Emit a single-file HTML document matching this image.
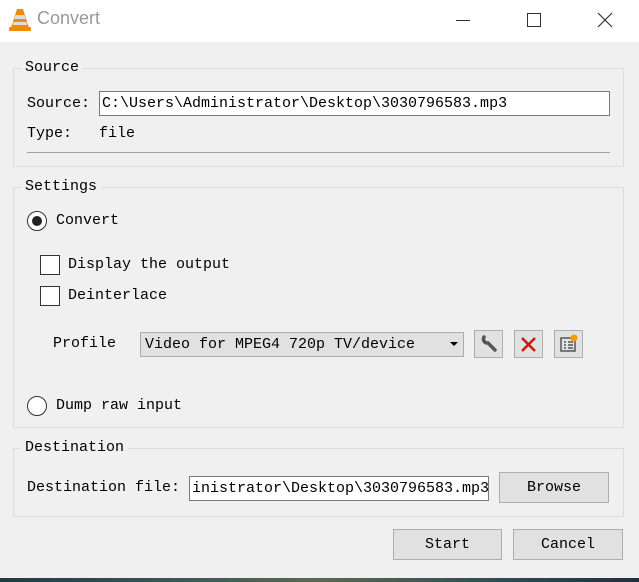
<!DOCTYPE html>
<html><head><style>
*{margin:0;padding:0;box-sizing:border-box}
body{width:639px;height:582px;background:#f0f0f0;position:relative;overflow:hidden;font-family:"Liberation Mono","Noto Sans CJK SC",monospace;font-size:15px;color:#000}
.a{position:absolute;white-space:nowrap}
.grp{position:absolute;border:1px solid #dcdcdc}
.lg{position:absolute;background:#f0f0f0;padding:0 4px;line-height:18px}
.btn{position:absolute;background:#e1e1e1;border:1px solid #adadad;text-align:center}
.inp{position:absolute;background:#fff;border:1px solid #7a7a7a;padding-left:2px;overflow:hidden;white-space:nowrap}
.cb{position:absolute;width:20px;height:20px;border:1px solid #333;background:#fff}
</style></head><body>
<div class="a" style="left:0;top:0;width:639px;height:42px;background:#fff"></div>
<svg class="a" style="left:9px;top:8px" width="22" height="24" viewBox="0 0 22 24"><polygon points="8,1 14,1 20,20 2,20" fill="#f08a00"/><polygon points="6.5,7 15.5,7 16.5,11 5.5,11" fill="#ddd"/><polygon points="4.5,14 17.5,14 18.3,17 3.7,17" fill="#ddd"/><rect x="0" y="19" width="22" height="4" rx="1" fill="#f08a00"/></svg>
<div class="a" style="left:37px;top:8px;font-family:'Liberation Sans',sans-serif;font-size:18px;color:#999">Convert</div>
<div class="a" style="left:456px;top:20px;width:14px;height:1px;background:#333"></div>
<div class="a" style="left:527px;top:13px;width:14px;height:14px;border:1px solid #333"></div>
<svg class="a" style="left:597px;top:12px" width="16" height="16"><path d="M1 1L15 15M15 1L1 15" stroke="#333" stroke-width="1.2"/></svg>

<div class="grp" style="left:13px;top:68px;width:611px;height:99px"></div>
<div class="lg" style="left:21px;top:59px">Source</div>
<div class="a" style="left:27px;top:95px">Source:</div>
<div class="inp" style="left:99px;top:91px;width:511px;height:25px;line-height:23px">C:\Users\Administrator\Desktop\3030796583.mp3</div>
<div class="a" style="left:27px;top:125px">Type:</div>
<div class="a" style="left:99px;top:125px">file</div>
<div class="a" style="left:27px;top:152px;width:583px;height:1px;background:#a0a0a0"></div>

<div class="grp" style="left:13px;top:187px;width:611px;height:241px"></div>
<div class="lg" style="left:21px;top:178px">Settings</div>
<div class="a" style="left:27px;top:211px;width:20px;height:20px;border-radius:50%;border:1px solid #333;background:#fff"></div>
<div class="a" style="left:32px;top:216px;width:10px;height:10px;border-radius:50%;background:#222"></div>
<div class="a" style="left:56px;top:212px">Convert</div>
<div class="cb" style="left:40px;top:255px"></div>
<div class="a" style="left:68px;top:256px">Display the output</div>
<div class="cb" style="left:40px;top:286px"></div>
<div class="a" style="left:68px;top:287px">Deinterlace</div>
<div class="a" style="left:53px;top:335px">Profile</div>
<div class="btn" style="left:140px;top:332px;width:324px;height:25px;text-align:left;padding-left:4px;line-height:23px">Video for MPEG4 720p TV/device</div>
<svg class="a" style="left:450px;top:342px" width="8" height="5"><polygon points="0,0 8,0 4,4" fill="#000"/></svg>
<div class="btn" style="left:474px;top:330px;width:29px;height:28px"></div>
<svg class="a" style="left:479px;top:334px" width="20" height="20"><path d="M5 3a4 4 0 0 0 4 6l7 7" stroke="#555" stroke-width="3.5" fill="none" stroke-linecap="round"/></svg>
<div class="btn" style="left:514px;top:330px;width:29px;height:28px"></div>
<svg class="a" style="left:520px;top:336px" width="17" height="17"><path d="M2 2L15 15M15 2L2 15" stroke="#e01010" stroke-width="2.6"/></svg>
<div class="btn" style="left:554px;top:330px;width:29px;height:28px"></div>
<svg class="a" style="left:559px;top:334px" width="20" height="20"><rect x="2" y="4" width="14" height="13" fill="none" stroke="#555" stroke-width="1.5"/><path d="M5 8h2M9 8h5M5 11h2M9 11h5M5 14h2M9 14h5" stroke="#555" stroke-width="1.4"/><circle cx="15" cy="4" r="3.5" fill="#f59a00"/></svg>
<div class="a" style="left:27px;top:396px;width:20px;height:20px;border-radius:50%;border:1px solid #333;background:#fff"></div>
<div class="a" style="left:56px;top:397px">Dump raw input</div>

<div class="grp" style="left:13px;top:448px;width:611px;height:69px"></div>
<div class="lg" style="left:21px;top:439px">Destination</div>
<div class="a" style="left:27px;top:479px">Destination file:</div>
<div class="inp" style="left:189px;top:476px;width:300px;height:25px;line-height:23px">inistrator\Desktop\3030796583.mp3</div>
<div class="btn" style="left:499px;top:472px;width:110px;height:31px;line-height:29px">Browse</div>
<div class="btn" style="left:393px;top:529px;width:109px;height:31px;line-height:29px">Start</div>
<div class="btn" style="left:513px;top:529px;width:110px;height:31px;line-height:29px">Cancel</div>
<div class="a" style="left:0;top:578px;width:639px;height:4px;background:linear-gradient(90deg,#1d3b46,#3a5a5a 30%,#5a6a50 50%,#2a4a55 80%,#203040)"></div>
</body></html>
